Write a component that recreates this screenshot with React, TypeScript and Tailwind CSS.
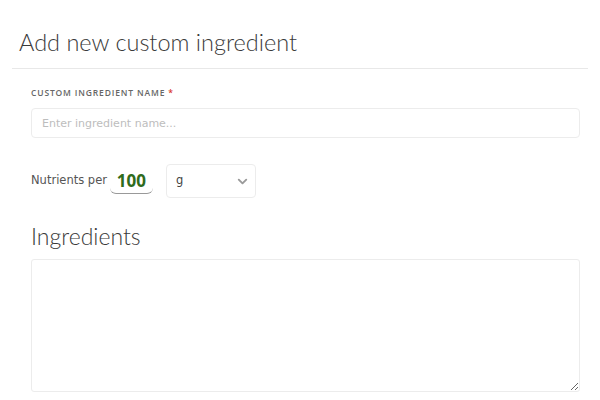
import { ChevronDown } from "lucide-react";

export default function App() {
  return (
    <div className="w-[600px] h-[400px] bg-white overflow-hidden font-['DejaVu_Sans',sans-serif] text-[#333]">
      {/* Header */}
      <div className="mx-3 border-b border-[#e8e8e8] pl-[7px] pt-[24px] pb-[8px]">
        <h1 className="font-['Lato',sans-serif] text-[23.5px] font-light leading-[36px] text-[#3a3a3a]">
          Add new custom ingredient
        </h1>
      </div>

      <div className="pl-[31px] pr-[20px]">
        {/* Name field */}
        <label className="block mt-[18px] font-['Open_Sans',sans-serif] text-[8.5px] font-semibold uppercase tracking-[0.85px] text-[#666] leading-[12px]">
          Custom ingredient name <span className="text-[#d9342b]">*</span>
        </label>
        <input
          type="text"
          placeholder="Enter ingredient name..."
          className="mt-[9px] block w-full h-[30px] rounded-[4px] border border-[#ececec] px-[10px] text-[11px] text-[#333] placeholder:text-[#bdbdbd] outline-none"
        />

        {/* Nutrients per */}
        <div className="mt-[26px] flex items-center">
          <span className="text-[11.5px] text-[#555]">Nutrients per</span>
          <input
            type="text"
            defaultValue="100"
            className="ml-[3px] w-[43px] h-[26px] border-b border-[#999] rounded-b-[6px] text-center font-['Open_Sans',sans-serif] text-[17px] font-bold text-[#2f6b1c] outline-none"
          />
          <div className="ml-[13px] w-[90px] h-[34px] rounded-[4px] border border-[#ececec] flex items-center justify-between pl-[9px] pr-[5px]">
            <span className="text-[11.5px] text-[#444]">g</span>
            <ChevronDown className="w-[15px] h-[15px] text-[#9a9a9a]" strokeWidth={3} />
          </div>
        </div>

        {/* Ingredients */}
        <h2 className="mt-[22px] font-['Lato',sans-serif] text-[23px] font-light leading-[32px] text-[#3a3a3a]">
          Ingredients
        </h2>
        <textarea className="mt-[7px] block w-full h-[133px] rounded-[3px] border border-[#ececec] outline-none resize-y" />
      </div>
    </div>
  );
}
